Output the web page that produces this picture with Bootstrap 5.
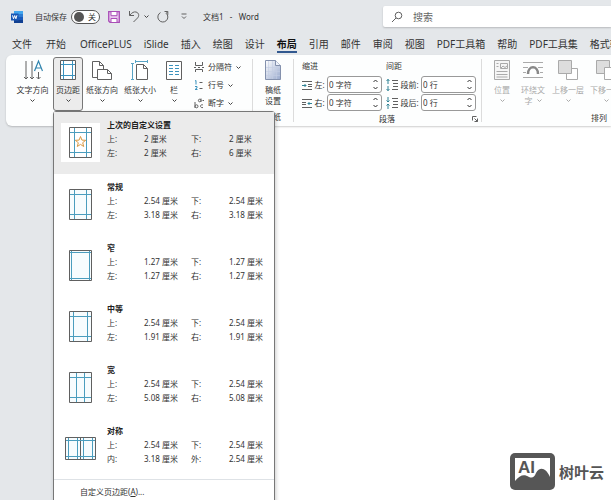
<!DOCTYPE html>
<html>
<head>
<meta charset="utf-8">
<meta name="viewport" content="width=device-width, initial-scale=1">
<title>文档1 - Word</title>
<link href="https://cdn.jsdelivr.net/npm/bootstrap@5.3.0/dist/css/bootstrap.min.css" rel="stylesheet">
<style>
body{font-family:"Noto Sans","Noto Sans CJK SC",sans-serif;font-size:8px;line-height:12px;color:#333;background:#e4e7ea}
svg{display:block;flex:none;fill:none;stroke:#606060}
button,input{font:inherit;color:inherit}
.plain{border:0;background:none;padding:0}
.titlebar{height:33px;padding-left:11px}
.save-switch{appearance:none;width:29px;height:14px;border:1px solid #555;border-radius:7px;background:#fff;margin:0;display:block}
.save-wrap::before{content:"";position:absolute;left:3px;top:2px;width:10px;height:10px;border-radius:50%;background:#555}
.save-wrap span{position:absolute;left:17px;top:1px;pointer-events:none}
.search{width:38%;height:21px;background:#fff;border-radius:2px 0 0 2px;box-shadow:0 1px 2px #0003;font-size:10px}
.search input{border:0;outline:0;background:none;min-width:0}
.search input::placeholder{color:#666;opacity:1}
.tabs{height:22px;padding-left:12px;gap:12px;font-size:10px;line-height:18px}
.tabs a{color:#333;text-decoration:none;white-space:nowrap;height:20px;padding-top:2px}
.tabs a:nth-child(-n+2){margin-right:2px}
.tabs a.current{font-weight:700;color:#111;border-bottom:2px solid #31588f}
.ribbon{height:71px;margin-left:6px;background:#fdfefe;border-radius:6px 0 0 6px;box-shadow:0 1px 2px #0003;padding:2px 0 0 6px;z-index:2}
.ribbon>*{flex-shrink:0}
.big{height:54px;width:38px;padding-top:2px;line-height:11px;white-space:nowrap}
.big svg{margin-bottom:3px}
.big.wide{width:41px}
.big.mid{width:32px}
.big.narrow{width:30px}
.big.open{background:#ececec;border:1px solid #777;border-radius:3px;padding-top:1px}
.big.off{color:#aaa}
.big.off svg{stroke:#aaa}
.big .chev,.chev{width:5px;height:11px;margin:0;stroke:#444}
.rule{border-left:1px solid #dcdcdc;margin:2px 0 4px}
.tools{width:63px;padding:4px 0 0 5px;gap:6px;white-space:nowrap}
.manuscript{width:40px}
.grouplabel{height:16px;line-height:14px}
.arrange{width:250px;padding-left:5px}
.arrange .grouplabel{padding-left:104px}
.para{width:187px;padding:3px 3px 0 8px}
.paragrid{display:grid;grid-template-columns:80px 90px;gap:1px 4px}
.paragrid>span{margin-bottom:3px}
.field{height:17px;white-space:nowrap}
.spin{height:17px;width:55px;border:1px solid #999;border-radius:3px;background:#fff;padding:0 3px 0 1px}
.spin input{border:0;outline:0;background:none;min-width:0;width:36px;padding:0}
.spin button{height:7px;line-height:0}
.spin svg{width:5px;height:4px}
.page-bg{margin-left:100px;background:#fff;padding:0 7px 10px 0}
.gallery{position:absolute;left:0;top:54px;width:222px;background:#fff;border:1px solid #777;border-radius:3px;box-shadow:1px 2px 4px #0003;z-index:5;color:#333}
.choice{height:61px;padding:6px 0 0 7px;text-align:left}
.choice.first{background:#ebebeb;height:62px}
.choice strong{color:#222;line-height:13px}
.thumb{width:39px;height:39px;margin:5px 7px 0 0}
.first .thumb{background:#fff}
.pair{display:grid;grid-template-columns:37px 47px 38px 40px;line-height:14px;padding-top:1px}
.more{border-top:1px solid #ddd;padding:6px 26px 8px}
.brandname{font-size:15px;line-height:20px;font-weight:700;color:#555}
.mark-letters{font-family:"Liberation Sans",sans-serif;font-size:17px;font-weight:700;fill:#565656}
</style>
</head>
<body>
<svg width="0" height="0" class="position-absolute">
<symbol id="down" viewBox="0 0 5 11"><path d="M.5 4.500l2 2 2-2"/></symbol>
<symbol id="u" viewBox="0 0 5 4"><path d="M.5 3l2-2 2 2" stroke="#333"/></symbol>
<symbol id="d" viewBox="0 0 5 4"><path d="M.5 1l2 2 2-2" stroke="#333"/></symbol>
</svg>
<div class="vh-100 overflow-hidden d-flex flex-column">
<header class="titlebar d-flex align-items-center">
  <svg width="12" height="12" viewBox="0 0 12 12"><g stroke="none"><path fill="#41a5ee" d="M3 0h9v3H3z"/><path fill="#2b7cd3" d="M3 3h9v3H3z"/><path fill="#185abd" d="M3 6h9v3H3z"/><path fill="#103f91" d="M3 9h9v3H3z"/><path fill="#1857b5" d="M0 2.500h7.500v7H0z"/></g><path d="M1.500 4.300l1 3.500 1.200-3.300 1.200 3.300 1-3.500" stroke="#fff"/></svg>
  <label class="ms-2 ps-1" for="autosave">自动保存</label>
  <span class="save-wrap position-relative ms-1"><input class="save-switch" type="checkbox" role="switch" id="autosave"><span>关</span></span>
  <button class="plain ms-2" aria-label="保存"><svg width="12" height="12" viewBox="0 0 12 12"><path d="M.7.700h10.600v10.600H2L.7 10z" fill="#e9c6ef" stroke="#a94fb7" stroke-width="1.300"/><path d="M3 1v3.700h6V1M3 11V7.500h6V11" fill="#fff" stroke="#a94fb7"/></svg></button>
  <button class="plain ms-2" aria-label="撤消"><svg width="12" height="13" viewBox="0 0 12 13"><path d="M1.500 1v4.500H6M1.700 5.300C4 2.500 6 1.500 8 2c3 .8 3.500 4 1.500 6L5.500 12"/></svg></button>
  <button class="plain ms-1" aria-label="撤消列表"><svg class="chev"><use href="#down"/></svg></button>
  <button class="plain ms-2" aria-label="重复"><svg width="12" height="12" viewBox="0 0 12 12"><path d="M7.500.500h3.300v3.300M10.600.800L9.200 2.300M3.500 1.600a5 5 0 1 0 5.700.7"/></svg></button>
  <button class="plain ms-2 ps-1" aria-label="自定义"><svg width="6" height="7" viewBox="0 0 6 7"><path d="M.5 1h5M1 3.500l2 2 2-2"/></svg></button>
  <span class="ms-3 text-nowrap">文档1 &nbsp;&nbsp;-&nbsp;&nbsp; Word</span>
  <label class="search d-flex align-items-center ps-2 ms-auto">
    <svg class="me-2" width="12" height="12" viewBox="0 0 12 12"><circle cx="7.500" cy="4.500" r="3.300"/><path d="M5 7L1 11"/></svg>
    <input class="flex-grow-1" placeholder="搜索" aria-label="搜索">
  </label>
</header>
<nav class="tabs d-flex">
<a href="#">文件</a><a href="#">开始</a><a href="#">OfficePLUS</a><a href="#">iSlide</a><a href="#">插入</a><a href="#">绘图</a><a href="#">设计</a><a href="#" class="current">布局</a><a href="#">引用</a><a href="#">邮件</a><a href="#">审阅</a><a href="#">视图</a><a href="#">PDF工具箱</a><a href="#">帮助</a><a href="#">PDF工具集</a><a href="#">格式转换</a>
</nav>
<section class="ribbon d-flex position-relative flex-shrink-0">
  <button class="plain big wide d-flex flex-column align-items-center"><svg width="20" height="22" viewBox="0 0 20 22"><path d="M3 2v18M1 18l2 2 2-2M9 2v18M7 18l2 2 2-2M15.500 13v7M13.500 18l2 2 2-2"/><path d="M11.500 12L15.500 2l4 10M13 9h5" stroke="#2f83ad" stroke-width="1.200"/></svg>文字方向<svg class="chev"><use href="#down"/></svg></button>
  <div class="position-relative">
    <button class="plain big narrow open d-flex flex-column align-items-center" aria-expanded="true"><svg width="18" height="22" viewBox="0 0 18 22"><path fill="#fff" d="M1.500 1.500h15v19h-15z"/><path d="M4.500 2v18M13.500 2v18M2 5.500h14M2 16.500h14" stroke="#3b92bd"/></svg>页边距<svg class="chev"><use href="#down"/></svg></button>
    <div class="gallery">
      <button class="plain choice first d-flex w-100"><svg class="thumb" viewBox="0 0 39 39"><path fill="#fff" d="M8.500 4.500h22v30h-22z"/><path d="M13.500 5v29M25.500 5v29M9 9.500h21M9 29.500h21" stroke="#4b9dbe"/><path d="M19.500 13.500l1.400 3.600 3.800.2-3 2.400 1 3.800-3.200-2.100-3.200 2.100 1-3.800-3-2.400 3.800-.2z" stroke="#d99a45"/></svg><span><strong>上次的自定义设置</strong><span class="pair"><span>上:</span><span>2 厘米</span><span>下:</span><span>2 厘米</span><span>左:</span><span>2 厘米</span><span>右:</span><span>6 厘米</span></span></span></button>
      <button class="plain choice d-flex w-100"><svg class="thumb" viewBox="0 0 39 39"><path fill="#f7fcfe" d="M8.500 4.500h22v30h-22z"/><path d="M13.500 5v29M25.500 5v29M9 9.500h21M9 29.500h21" stroke="#4b9dbe"/></svg><span><strong>常规</strong><span class="pair"><span>上:</span><span>2.54 厘米</span><span>下:</span><span>2.54 厘米</span><span>左:</span><span>3.18 厘米</span><span>右:</span><span>3.18 厘米</span></span></span></button>
      <button class="plain choice d-flex w-100"><svg class="thumb" viewBox="0 0 39 39"><path fill="#f7fcfe" d="M8.500 4.500h22v30h-22z"/><path d="M10.500 5v29M28.500 5v29M9 6.500h21M9 32.500h21" stroke="#4b9dbe"/></svg><span><strong>窄</strong><span class="pair"><span>上:</span><span>1.27 厘米</span><span>下:</span><span>1.27 厘米</span><span>左:</span><span>1.27 厘米</span><span>右:</span><span>1.27 厘米</span></span></span></button>
      <button class="plain choice d-flex w-100"><svg class="thumb" viewBox="0 0 39 39"><path fill="#f7fcfe" d="M8.500 4.500h22v30h-22z"/><path d="M12.500 5v29M26.500 5v29M9 9.500h21M9 29.500h21" stroke="#4b9dbe"/></svg><span><strong>中等</strong><span class="pair"><span>上:</span><span>2.54 厘米</span><span>下:</span><span>2.54 厘米</span><span>左:</span><span>1.91 厘米</span><span>右:</span><span>1.91 厘米</span></span></span></button>
      <button class="plain choice d-flex w-100"><svg class="thumb" viewBox="0 0 39 39"><path fill="#f7fcfe" d="M8.500 4.500h22v30h-22z"/><path d="M15.500 5v29M23.500 5v29M9 9.500h21M9 29.500h21" stroke="#4b9dbe"/></svg><span><strong>宽</strong><span class="pair"><span>上:</span><span>2.54 厘米</span><span>下:</span><span>2.54 厘米</span><span>左:</span><span>5.08 厘米</span><span>右:</span><span>5.08 厘米</span></span></span></button>
      <button class="plain choice d-flex w-100"><svg class="thumb" viewBox="0 0 39 39"><path fill="#f7fcfe" d="M4.500 8.500h30v22h-30zM19.500 8.500v22"/><path d="M7.500 9v21M16.500 9v21M22.500 9v21M31.500 9v21M5 11.500h29M5 27.500h29" stroke="#4b9dbe"/></svg><span><strong>对称</strong><span class="pair"><span>上:</span><span>2.54 厘米</span><span>下:</span><span>2.54 厘米</span><span>内:</span><span>3.18 厘米</span><span>外:</span><span>2.54 厘米</span></span></span></button>
      <button class="plain more w-100 text-start border-top">自定义页边距(<u>A</u>)...</button>
    </div>
  </div>
  <button class="plain big d-flex flex-column align-items-center"><svg width="22" height="22" viewBox="0 0 22 22"><path fill="#fff" d="M1.500 2.500h7l4 4v12h-11z"/><path d="M8.500 2.500v4h4"/><path fill="#fff" d="M6.500 10.500h10l4 4v6h-14z"/><path d="M16.500 10.500v4h4"/></svg>纸张方向<svg class="chev"><use href="#down"/></svg></button>
  <button class="plain big d-flex flex-column align-items-center"><svg width="18" height="22" viewBox="0 0 18 22"><path d="M1.500 4.500v16M4.500 2.500h12M0 4.500h3M0 20.500h3M4.500 1v3M16.500 1v3" stroke="#58a3c4"/><path fill="#fff" d="M5.500 5.500h7l4 4v11h-11z"/><path d="M12.500 5.500v4h4"/></svg>纸张大小<svg class="chev"><use href="#down"/></svg></button>
  <button class="plain big narrow d-flex flex-column align-items-center"><svg width="18" height="22" viewBox="0 0 18 22"><path fill="#fff" d="M1.500 2.500h15v18h-15z"/><path d="M4 6.500h4M4 9.500h4M4 12.500h4M4 15.500h4M10 6.500h4M10 9.500h4M10 12.500h4M10 15.500h4" stroke="#3b92bd"/></svg>栏<svg class="chev"><use href="#down"/></svg></button>
  <div class="tools d-flex flex-column">
    <button class="plain d-flex align-items-center gap-1"><svg width="10" height="12" viewBox="0 0 10 12"><path d="M1.500 1v3.500h7V1M1.500 11V8.500h7V11M0 6.500h2M4 6.500h2M8 6.500h2"/></svg>分隔符<svg class="chev"><use href="#down"/></svg></button>
    <button class="plain d-flex align-items-center gap-1"><svg width="10" height="12" viewBox="0 0 10 12"><path d="M1 2l1-.5v4M1 7.500h2V9L1 10.500h2.500" stroke="#3b92bd"/><path d="M5.500 3.500h3M5.500 9.500h3"/></svg>行号<svg class="chev"><use href="#down"/></svg></button>
    <button class="plain d-flex align-items-center gap-1"><svg width="10" height="12" viewBox="0 0 10 12"><path d="M1 5v6"/><circle cx="2.500" cy="9.300" r="1.500"/><path d="M9 8C6 6.500 5.500 11.500 9 10.500M7 1.500v3.500M8.500 3.500h1.500"/><circle cx="5.700" cy="3.500" r="1.300"/></svg>断字<svg class="chev"><use href="#down"/></svg></button>
  </div>
  <div class="rule"></div>
  <div class="manuscript d-flex flex-column align-items-center">
    <button class="plain big d-flex flex-column align-items-center"><svg width="18" height="22" viewBox="0 0 18 22"><defs><linearGradient id="paper" x2="1" y2="1"><stop stop-color="#fff"/><stop offset="1" stop-color="#98a9cd"/></linearGradient></defs><path fill="url(#paper)" stroke="#8491ad" d="M1.500 1.500h10l5 5v14h-15z"/><path stroke="#c3cde2" d="M4.500 2v18M8.500 2v18M12.500 7v13M2 8.500h14M2 12.500h14M2 16.500h14" opacity=".6"/><path fill="#eef2fa" stroke="#8491ad" d="M11.500 1.500v5h5"/></svg>稿纸<br>设置</button>
    <span class="grouplabel mt-auto">稿纸</span>
  </div>
  <div class="rule"></div>
  <div class="para d-flex flex-column">
    <div class="paragrid">
      <span>缩进</span><span>间距</span>
      <div class="field d-flex align-items-center justify-content-between"><svg width="10" height="10" viewBox="0 0 10 10"><path d="M0 1.500h10M6 4.500h4M6 6.500h4M0 9.500h10"/><path d="M0 5.500h4M2.500 4L4 5.500 2.500 7" stroke="#2f8295"/></svg><label for="il">左:</label><span class="spin d-flex align-items-center"><input id="il" value="0 字符"><span class="ms-auto d-flex flex-column"><button class="plain" aria-label="增加"><svg><use href="#u"/></svg></button><button class="plain" aria-label="减少"><svg><use href="#d"/></svg></button></span></span></div>
      <div class="field d-flex align-items-center justify-content-between"><svg width="12" height="12" viewBox="0 0 12 12"><path d="M6 1.500h6M7 4.500h5M7 7.500h5M6 10.500h6"/><path d="M2 0v5M.5 2L2 .5 3.500 2M2 7v5M.5 10L2 11.500 3.500 10" stroke="#2f8295"/></svg><label for="sb">段前:</label><span class="spin d-flex align-items-center"><input id="sb" value="0 行"><span class="ms-auto d-flex flex-column"><button class="plain" aria-label="增加"><svg><use href="#u"/></svg></button><button class="plain" aria-label="减少"><svg><use href="#d"/></svg></button></span></span></div>
      <div class="field d-flex align-items-center justify-content-between"><svg width="10" height="10" viewBox="0 0 10 10"><path d="M0 1.500h10M0 4.500h4M0 6.500h4M0 9.500h10"/><path d="M10 5.500H6M7.500 4L6 5.500 7.500 7" stroke="#2f8295"/></svg><label for="ir">右:</label><span class="spin d-flex align-items-center"><input id="ir" value="0 字符"><span class="ms-auto d-flex flex-column"><button class="plain" aria-label="增加"><svg><use href="#u"/></svg></button><button class="plain" aria-label="减少"><svg><use href="#d"/></svg></button></span></span></div>
      <div class="field d-flex align-items-center justify-content-between"><svg width="12" height="12" viewBox="0 0 12 12"><path d="M6 1.500h6M7 4.500h5M7 7.500h5M6 10.500h6"/><path d="M2 0v5M.5 3.500L2 5l1.500-1.500M2 7v5M.5 8.500L2 7l1.500 1.500" stroke="#2f8295"/></svg><label for="sa">段后:</label><span class="spin d-flex align-items-center"><input id="sa" value="0 行"><span class="ms-auto d-flex flex-column"><button class="plain" aria-label="增加"><svg><use href="#u"/></svg></button><button class="plain" aria-label="减少"><svg><use href="#d"/></svg></button></span></span></div>
    </div>
    <div class="grouplabel mt-auto d-flex align-items-center"><span class="mx-auto">段落</span><button class="plain" aria-label="段落设置"><svg width="6" height="6" viewBox="0 0 6 6"><path d="M.5 4.500v-4h4M2.500 2.500l3 3M5.500 2.500v3h-3"/></svg></button></div>
  </div>
  <div class="rule"></div>
  <div class="flex-shrink-1 flex-grow-1 overflow-hidden">
  <div class="arrange d-flex flex-column h-100">
    <div class="d-flex">
      <button class="plain big off narrow d-flex flex-column align-items-center" disabled><svg width="16" height="22" viewBox="0 0 16 22"><path fill="#f6f6f6" d="M.5 1.500h15v19H.5z"/><path d="M6.500 4.500h7v5h-7zM7 9l2-2 2 1.500L13 7M2.500 4.500h2M2.500 7.500h2M2.500 12.500h11M2.500 15.500h11M2.500 18h11"/></svg>位置<svg class="chev"><use href="#down"/></svg></button>
      <button class="plain big off mid d-flex flex-column align-items-center" disabled><svg width="20" height="22" viewBox="0 0 20 22"><path d="M0 3.500h20M0 8.500h5M15 8.500h5M0 13.500h3M17 13.500h3M0 18.500h20"/><path d="M5 15c0-9 10-9 10 0" stroke="#888" stroke-width="2.500"/></svg>环绕文<span class="d-flex gap-1">字<svg class="chev"><use href="#down"/></svg></span></button>
      <button class="plain big off d-flex flex-column align-items-center" disabled><svg width="20" height="22" viewBox="0 0 20 22"><path fill="#fff" d="M8.500 9.500h11v11h-11z"/><path fill="#ddd" d="M.5 1.500h13v13H.5z"/></svg>上移一层<svg class="chev"><use href="#down"/></svg></button>
      <button class="plain big off d-flex flex-column align-items-center" disabled><svg width="20" height="22" viewBox="0 0 20 22"><path fill="#ddd" d="M.5 1.500h13v13H.5z"/><path fill="#fff" d="M8.500 8.500h11v12h-11z"/></svg>下移一层<svg class="chev"><use href="#down"/></svg></button>
    </div>
    <span class="grouplabel mt-auto">排列</span>
  </div>
  </div>
</section>
<main class="page-bg flex-grow-1 d-flex align-items-end justify-content-end">
  <div class="d-flex align-items-center gap-1"><svg width="45" height="37" viewBox="0 0 45 37"><g stroke="none"><rect width="45" height="37" rx="5" fill="#565656"/><path fill="#fff" d="M5 5h35v19c-4-9-10-11-14-4-2 5-4 5-7 4-5-3-9-2-14 4z"/><text class="mark-letters" x="8" y="20">AI</text></g></svg><span class="brandname">树叶云</span></div>
</main>
</div>
<script src="https://cdn.jsdelivr.net/npm/bootstrap@5.3.0/dist/js/bootstrap.bundle.min.js"></script>
</body>
</html>
